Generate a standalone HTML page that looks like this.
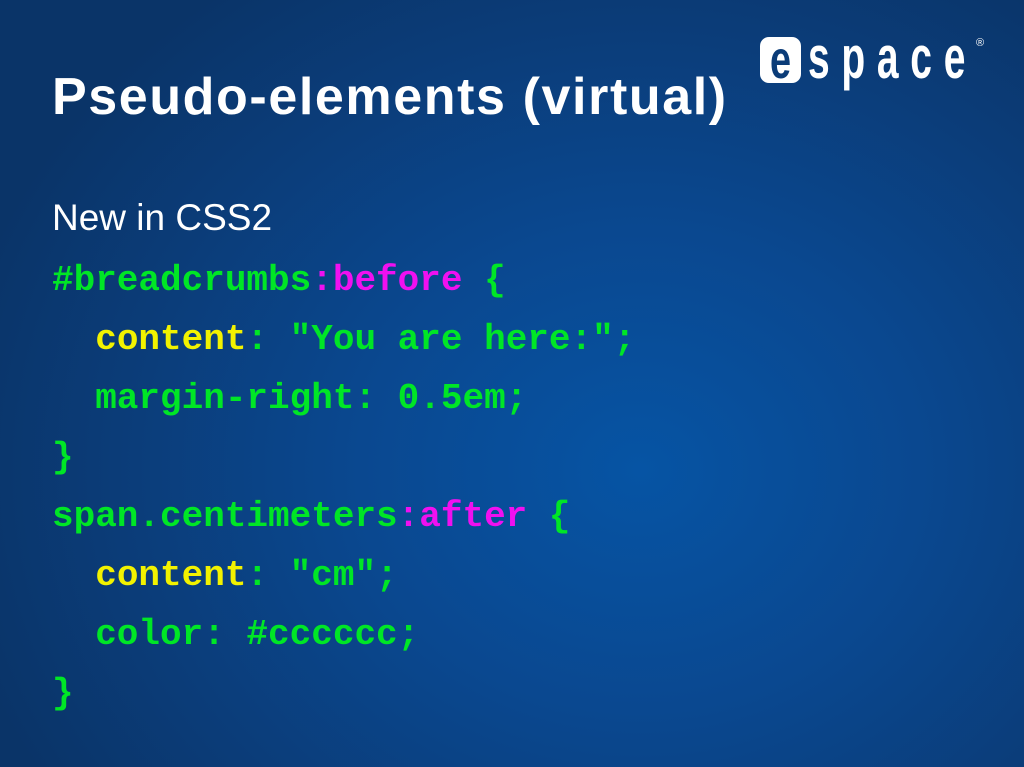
<!DOCTYPE html>
<html><head><meta charset="utf-8"><style>
html,body{margin:0;padding:0}
body{width:1024px;height:767px;overflow:hidden;position:relative;
background:radial-gradient(ellipse 700px 600px at 640px 470px,#0654a4 0%,#0a4890 40%,#0b3c78 75%,#0a3468 100%);
font-family:"Liberation Sans",sans-serif;color:#fff}
.t{position:absolute;left:52px;top:71px;font-size:52px;font-weight:bold;letter-spacing:1.6px;white-space:nowrap;line-height:1}
.n{position:absolute;left:52px;top:199px;font-size:37px;white-space:nowrap;line-height:1}
.c{position:absolute;left:52px;font-family:"Liberation Mono",monospace;font-weight:bold;font-size:36px;line-height:1;white-space:pre;color:#00e626}
.y{color:#f2f200}.m{color:#f010f0}
.logo{position:absolute;left:760px;top:37px;width:41px;height:46px;background:#fff;border-radius:9px;overflow:hidden}
.logo span{position:absolute;left:0;right:0;top:-4px;text-align:center;color:#0b3c78;font-weight:bold;font-size:54px;line-height:1;transform:scaleX(0.7)}
.sp{position:absolute;left:808px;top:28px;font-weight:bold;font-size:60px;line-height:1;letter-spacing:18px;transform:scaleX(0.65);transform-origin:left top;white-space:nowrap}
.r{position:absolute;left:976px;top:37px;font-size:11px}
</style></head><body>
<div class="t">Pseudo-elements (virtual)</div>
<div class="logo"><span>e</span></div>
<div class="sp">space</div>
<div class="r">®</div>
<div class="n">New in CSS2</div>
<div class="c" style="top:263px">#breadcrumbs<span class="m">:before</span> {</div>
<div class="c" style="top:322px">  <span class="y">content</span>: "You are here:";</div>
<div class="c" style="top:381px">  margin-right: 0.5em;</div>
<div class="c" style="top:440px">}</div>
<div class="c" style="top:499px">span.centimeters<span class="m">:after</span> {</div>
<div class="c" style="top:558px">  <span class="y">content</span>: "cm";</div>
<div class="c" style="top:617px">  color: #cccccc;</div>
<div class="c" style="top:676px">}</div>
</body></html>
